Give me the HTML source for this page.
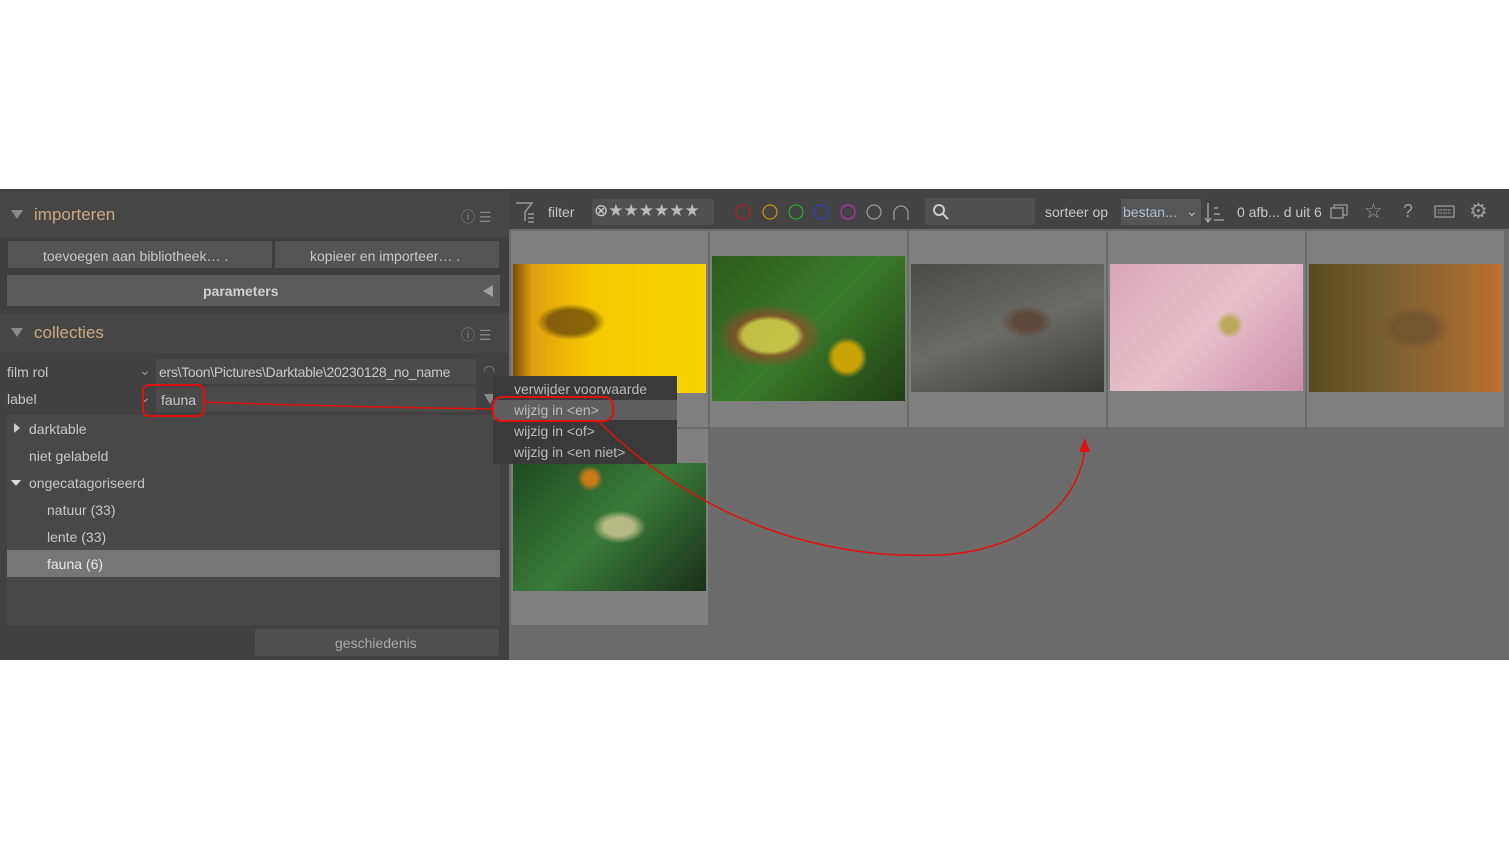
<!DOCTYPE html>
<html><head><meta charset="utf-8"><style>
*{margin:0;padding:0;box-sizing:border-box}
body{width:1509px;height:849px;background:#fff;position:relative;overflow:hidden;font-family:"Liberation Sans","DejaVu Sans",sans-serif;}
.a{position:absolute}
.t{position:absolute;white-space:nowrap;color:#c8c8c8;font-size:14px}
.cell{position:absolute;background:#808080;width:197px;height:196px}
.img{position:absolute}
</style></head><body>
<div class="a" style="left:0;top:189px;width:1509px;height:471px;background:#434343"></div>
<div class="a" style="left:0;top:189px;width:509px;height:471px;background:#414141"></div>
<div class="a" style="left:0;top:192px;width:509px;height:45px;background:#464646"></div>
<div class="a" style="left:11px;top:210px;width:0;height:0;border-left:6px solid transparent;border-right:6px solid transparent;border-top:9px solid #8a8a8a"></div>
<div class="t" style="left:34px;top:205px;font-size:17px;color:#c9a882">importeren</div>
<div class="t" style="left:461px;top:207px;font-size:14px;color:#888">ⓘ ☰</div>
<div class="a" style="left:0;top:237px;width:509px;height:74px;background:#3e3e3e"></div>
<div class="a" style="left:8px;top:241px;width:264px;height:27px;background:#545454"></div>
<div class="a" style="left:275px;top:241px;width:224px;height:27px;background:#545454"></div>
<div class="t" style="left:43px;top:248px">toevoegen aan bibliotheek… .</div>
<div class="t" style="left:310px;top:248px">kopieer en importeer… .</div>
<div class="a" style="left:7px;top:275px;width:493px;height:31px;background:#5b5b5b"></div>
<div class="t" style="left:203px;top:283px;font-weight:bold;color:#cfcfcf">parameters</div>
<div class="a" style="left:483px;top:285px;width:0;height:0;border-top:6px solid transparent;border-bottom:6px solid transparent;border-right:10px solid #a0a0a0"></div>
<div class="a" style="left:0;top:314px;width:509px;height:39px;background:#464646"></div>
<div class="a" style="left:11px;top:328px;width:0;height:0;border-left:6px solid transparent;border-right:6px solid transparent;border-top:9px solid #8a8a8a"></div>
<div class="t" style="left:34px;top:323px;font-size:17px;color:#c9a882">collecties</div>
<div class="t" style="left:461px;top:325px;font-size:14px;color:#888">ⓘ ☰</div>
<div class="t" style="left:7px;top:364px">film rol</div>
<div class="t" style="left:139px;top:362px;color:#999">⌄</div>
<div class="a" style="left:156px;top:359px;width:320px;height:25px;background:#4a4a4a"></div>
<div class="t" style="left:159px;top:364px;letter-spacing:-0.3px">ers\Toon\Pictures\Darktable\20230128_no_name</div>
<div class="t" style="left:483px;top:362px;color:#888">◠</div>
<div class="t" style="left:7px;top:391px">label</div>
<div class="t" style="left:139px;top:389px;color:#999">⌄</div>
<div class="a" style="left:156px;top:387px;width:320px;height:25px;background:#4a4a4a"></div>
<div class="t" style="left:161px;top:392px">fauna</div>
<div class="a" style="left:484px;top:394px;width:0;height:0;border-left:6px solid transparent;border-right:6px solid transparent;border-top:10px solid #888"></div>
<div class="a" style="left:7px;top:415px;width:493px;height:210px;background:#484848"></div>
<div class="a" style="left:14px;top:423px;width:0;height:0;border-top:5px solid transparent;border-bottom:5px solid transparent;border-left:6px solid #ccc"></div>
<div class="t" style="left:29px;top:421px">darktable</div>
<div class="t" style="left:29px;top:448px">niet gelabeld</div>
<div class="a" style="left:11px;top:480px;width:0;height:0;border-left:5px solid transparent;border-right:5px solid transparent;border-top:6px solid #ddd"></div>
<div class="t" style="left:29px;top:475px">ongecatagoriseerd</div>
<div class="t" style="left:47px;top:502px">natuur (33)</div>
<div class="t" style="left:47px;top:529px">lente (33)</div>
<div class="a" style="left:7px;top:550px;width:493px;height:27px;background:#767676"></div>
<div class="t" style="left:47px;top:556px;color:#e8e8e8">fauna (6)</div>
<div class="a" style="left:255px;top:629px;width:244px;height:27px;background:#4f4f4f;border-radius:2px"></div>
<div class="t" style="left:335px;top:635px;color:#aaa">geschiedenis</div>
<!-- top bar -->
<svg class="a" style="left:514px;top:201px" width="24" height="24"><path d="M2 2 L18 2 L11 11 L11 20 M14 13 L20 13 M14 17 L20 17 M14 21 L20 21" fill="none" stroke="#999" stroke-width="1.5"/></svg>
<div class="t" style="left:548px;top:204px">filter</div>
<div class="a" style="left:592px;top:199px;width:122px;height:26px;background:#505050;border-radius:3px"></div>
<div class="t" style="left:594px;top:201px;font-size:17px;color:#ccc">⊗<span style="color:#bbb">★★★★★★</span></div>
<svg class="a" style="left:733px;top:202px" width="180" height="22">
<g fill="none" stroke-width="1.3">
<circle cx="10" cy="10" r="7" stroke="#b02020"/>
<circle cx="37" cy="10" r="7" stroke="#c09020"/>
<circle cx="63" cy="10" r="7" stroke="#30a030"/>
<circle cx="88" cy="10" r="7" stroke="#3040c0"/>
<circle cx="115" cy="10" r="7" stroke="#b030b0"/>
<circle cx="141" cy="10" r="7" stroke="#999"/>
<path d="M161 18 L161 11 A7 7 0 0 1 175 11 L175 18" stroke="#999"/>
</g></svg>
<div class="a" style="left:925px;top:198px;width:110px;height:27px;background:#505050;border-radius:2px"></div>
<svg class="a" style="left:932px;top:203px" width="18" height="18"><circle cx="7" cy="7" r="5" fill="none" stroke="#ccc" stroke-width="2"/><path d="M11 11 L16 16" stroke="#ccc" stroke-width="2"/></svg>
<div class="t" style="left:1045px;top:204px">sorteer op</div>
<div class="a" style="left:1121px;top:199px;width:80px;height:26px;background:#565656"></div>
<div class="t" style="left:1123px;top:204px;color:#aec0d8">bestan...</div>
<div class="t" style="left:1186px;top:203px;color:#bbb">⌄</div>
<svg class="a" style="left:1204px;top:202px" width="22" height="22"><path d="M4 1 L4 19 M1 16 L4 20 L7 16 M10 6 L14 6 M10 12 L16 12 M10 18 L20 18" fill="none" stroke="#aaa" stroke-width="1.3"/></svg>
<div class="t" style="left:1237px;top:204px">0 afb... d uit 6</div>
<svg class="a" style="left:1330px;top:203px" width="20" height="18"><rect x="1" y="5" width="12" height="10" fill="none" stroke="#999" stroke-width="1.3"/><path d="M4 5 L4 2 L17 2 L17 12 L13 12" fill="none" stroke="#999" stroke-width="1.3"/></svg>
<div class="t" style="left:1364px;top:199px;font-size:21px;color:#999">☆</div>
<div class="t" style="left:1403px;top:201px;font-size:18px;color:#999">?</div>
<svg class="a" style="left:1434px;top:204px" width="22" height="16"><rect x="1" y="2" width="19" height="11" fill="none" stroke="#999" stroke-width="1.3"/><path d="M4 6 H17 M4 9 H17" stroke="#999" stroke-width="1.3" stroke-dasharray="1.5 1"/></svg>
<div class="t" style="left:1469px;top:199px;font-size:21px;color:#999">⚙</div>
<!-- grid -->
<div class="a" style="left:509px;top:229px;width:1000px;height:431px;background:#6b6b6b"></div>
<div class="cell" style="left:511px;top:231px"></div>
<div class="cell" style="left:710px;top:231px"></div>
<div class="cell" style="left:909px;top:231px"></div>
<div class="cell" style="left:1108px;top:231px"></div>
<div class="cell" style="left:1307px;top:231px;width:197px"></div>
<div class="cell" style="left:511px;top:429px"></div>
<div class="img" style="left:513px;top:264px;width:193px;height:129px;background:radial-gradient(ellipse at 30% 45%,rgba(90,60,10,.7) 0 12%,transparent 18%),linear-gradient(90deg,#7a4a08 0,#e0a010 10%,#f5c800 40%,#f8d400 100%)"></div>
<div class="img" style="left:712px;top:256px;width:193px;height:145px;background:radial-gradient(ellipse at 30% 55%,rgba(230,210,80,.8) 0 14%,rgba(190,60,40,.5) 18%,transparent 28%),radial-gradient(circle at 70% 70%,rgba(240,180,0,.8) 0 8%,transparent 12%),linear-gradient(135deg,#2d5a1e,#3b7a2a 50%,#1f3d14)"></div>
<div class="img" style="left:911px;top:264px;width:193px;height:128px;background:radial-gradient(ellipse at 60% 45%,rgba(90,58,40,.7) 0 8%,transparent 16%),linear-gradient(160deg,#4a4a48,#6a6a66 50%,#3a3a38)"></div>
<div class="img" style="left:1110px;top:264px;width:193px;height:127px;background:radial-gradient(circle at 62% 48%,rgba(168,160,48,.7) 0 5%,transparent 10%),linear-gradient(135deg,#d8a8b8,#e8c0cc 50%,#c890a8)"></div>
<div class="img" style="left:1309px;top:264px;width:193px;height:128px;background:radial-gradient(ellipse at 55% 50%,rgba(106,80,48,.7) 0 14%,transparent 24%),linear-gradient(90deg,#5a4a20,#7a6030 40%,#a06a30 80%,#c07030)"></div>
<div class="img" style="left:513px;top:463px;width:193px;height:128px;background:radial-gradient(ellipse at 55% 50%,rgba(224,208,160,.75) 0 10%,transparent 18%),radial-gradient(circle at 40% 12%,rgba(240,128,16,.8) 0 4%,transparent 8%),linear-gradient(135deg,#1f4a20,#3a7a3a 50%,#183018)"></div>
<!-- menu -->
<div class="a" style="left:493px;top:376px;width:184px;height:88px;background:#3a3a3a"></div>
<div class="a" style="left:493px;top:400px;width:184px;height:20px;background:#5f5f5f"></div>
<div class="t" style="left:514px;top:381px;color:#bbb">verwijder voorwaarde</div>
<div class="t" style="left:514px;top:402px;color:#bbb">wijzig in &lt;en&gt;</div>
<div class="t" style="left:514px;top:423px;color:#bbb">wijzig in &lt;of&gt;</div>
<div class="t" style="left:514px;top:444px;color:#bbb">wijzig in &lt;en niet&gt;</div>
<svg class="a" style="left:0;top:0" width="1509" height="849">
<rect x="143" y="385" width="61" height="31" rx="6" fill="none" stroke="#e01010" stroke-width="2"/>
<rect x="493" y="397" width="120" height="24" rx="9" fill="none" stroke="#e01010" stroke-width="2"/>
<path d="M204 402 Q300 406 493 409" fill="none" stroke="#e01010" stroke-width="1.5"/>
<path d="M598 421 C700 520 820 560 940 555 C1030 550 1080 500 1085 448" fill="none" stroke="#e01010" stroke-width="1.5"/>
<path d="M1079 452 L1085 438 L1090 452 Z" fill="#e01010"/>
</svg>
</body></html>
